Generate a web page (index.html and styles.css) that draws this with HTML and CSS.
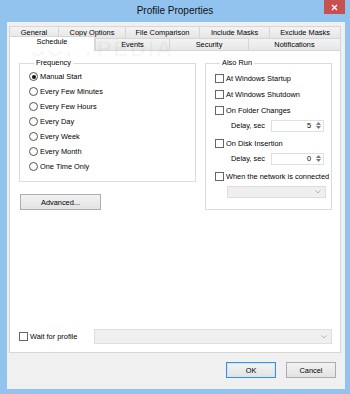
FILE: index.html
```html
<!DOCTYPE html>
<html lang="en">
  <head>
    <meta charset="UTF-8" />
    <title>Profile Properties</title>
    <link rel="stylesheet" href="styles.css">
  </head>
  <body>
    <div class="window">
      <div class="titlebar">
        <span class="title">Profile Properties</span>
        <div class="close">
          <svg width="7" height="7" viewBox="0 0 7 7"><path d="M1 1L6 6M6 1L1 6" stroke="#fff" stroke-width="1.4"/></svg>
        </div>
      </div>
      <div class="client">
        <div class="tabs">
          <div class="tabrow row1">
            <div class="tab">General</div>
            <div class="tab">Copy Options</div>
            <div class="tab">File Comparison</div>
            <div class="tab">Include Masks</div>
            <div class="tab">Exclude Masks</div>
          </div>
          <div class="tabrow row2">
            <div class="tab selected">Schedule</div>
            <div class="tab">Events</div>
            <div class="tab">Security</div>
            <div class="tab">Notifications</div>
          </div>
        </div>
        <div class="panel">
          <div class="groups">
            <div class="leftcol">
              <fieldset class="group freq">
                <legend>Frequency</legend>
                <div class="option"><span class="radio checked"></span>Manual Start</div>
                <div class="option"><span class="radio"></span>Every Few Minutes</div>
                <div class="option"><span class="radio"></span>Every Few Hours</div>
                <div class="option"><span class="radio"></span>Every Day</div>
                <div class="option"><span class="radio"></span>Every Week</div>
                <div class="option"><span class="radio"></span>Every Month</div>
                <div class="option"><span class="radio"></span>One Time Only</div>
              </fieldset>
              <button class="btn adv">Advanced...</button>
            </div>
            <fieldset class="group also">
              <legend>Also Run</legend>
              <div class="check-row"><span class="check"></span>At Windows Startup</div>
              <div class="check-row"><span class="check"></span>At Windows Shutdown</div>
              <div class="check-row"><span class="check"></span>On Folder Changes</div>
              <div class="delay">
                <span class="delay-label">Delay, sec</span>
                <div class="spin">
                  <span class="spin-value">5</span>
                  <span class="spin-arrows">
                    <svg width="5" height="3" viewBox="0 0 5 3"><path d="M0 3L2.5 0L5 3Z" fill="#777"/></svg>
                    <svg width="5" height="3" viewBox="0 0 5 3"><path d="M0 0L2.5 3L5 0Z" fill="#777"/></svg>
                  </span>
                </div>
              </div>
              <div class="check-row"><span class="check"></span>On Disk Insertion</div>
              <div class="delay">
                <span class="delay-label">Delay, sec</span>
                <div class="spin">
                  <span class="spin-value">0</span>
                  <span class="spin-arrows">
                    <svg width="5" height="3" viewBox="0 0 5 3"><path d="M0 3L2.5 0L5 3Z" fill="#777"/></svg>
                    <svg width="5" height="3" viewBox="0 0 5 3"><path d="M0 0L2.5 3L5 0Z" fill="#777"/></svg>
                  </span>
                </div>
              </div>
              <div class="check-row"><span class="check"></span>When the network is connected</div>
              <div class="combo net">
                <svg width="6" height="4" viewBox="0 0 6 4"><path d="M0.5 0.5L3 3L5.5 0.5" fill="none" stroke="#b5b5b5" stroke-width="1"/></svg>
              </div>
            </fieldset>
          </div>
          <div class="wait">
            <div class="wait-check"><span class="check"></span>Wait for profile</div>
            <div class="combo wait-combo">
              <svg width="6" height="4" viewBox="0 0 6 4"><path d="M0.5 0.5L3 3L5.5 0.5" fill="none" stroke="#b5b5b5" stroke-width="1"/></svg>
            </div>
          </div>
        </div>
        <div class="footer">
          <button class="btn ok">OK</button>
          <button class="btn">Cancel</button>
        </div>
      </div>
      <div class="watermark">SOFTPEDIA</div>
    </div>
  </body>
</html>
```

FILE: styles.css
```css
* {
  box-sizing: border-box;
}
body {
  margin: 0;
  font-family: "Liberation Sans", Arial, sans-serif;
  font-size: 7.4px;
  color: #000;
}
.window {
  width: 350px;
  height: 394px;
  background-color: #91c3ee;
  display: flex;
  flex-direction: column;
  position: relative;
  overflow: hidden;
}
.titlebar {
  height: 22px;
  display: grid;
  grid-template-columns: 1fr auto 1fr;
  align-items: start;
}
.title {
  grid-column: 2;
  font-size: 10px;
  line-height: 22px;
  color: #111;
}
.close {
  grid-column: 3;
  justify-self: end;
  margin-right: 5px;
  width: 21px;
  height: 14px;
  background-color: #c75050;
  display: flex;
  align-items: center;
  justify-content: center;
}
.client {
  flex: 1;
  margin: 0 5px 5px 7px;
  background-color: #f0f0f0;
  display: flex;
  flex-direction: column;
  padding: 4px 4px 0 2px;
}

/* tabs */
.tabrow {
  display: grid;
  height: 12px;
}
.row1 {
  grid-template-columns: 49px 67px 74px 70px 72px;
}
.row2 {
  grid-template-columns: 86px 74px 79px 93px;
}
.tab {
  border-top: 1px solid #d6d6d6;
  border-left: 1px solid #d6d6d6;
  background: linear-gradient(#f3f3f3, #e6e6e6);
  text-align: center;
  line-height: 11px;
  white-space: nowrap;
}
.tab:last-child {
  border-right: 1px solid #d6d6d6;
}
.row2 .tab {
  line-height: 12px;
}
.tab.selected {
  background: #fff;
  margin-top: -2px;
  height: 15px;
  line-height: 10px;
  border-right: 1px solid #d6d6d6;
  position: relative;
  z-index: 1;
}

/* panel */
.panel {
  height: 303px;
  background-color: #fff;
  border: 1px solid #d6d6d6;
  padding: 7px 8px 8px 9px;
  display: flex;
  flex-direction: column;
}
.groups {
  display: flex;
  gap: 9px;
}
.leftcol {
  display: flex;
  flex-direction: column;
}
.group {
  margin: 0;
  border: 1px solid #dcdcdc;
  min-width: 0;
}
.group legend {
  padding: 0 2px;
  margin-left: 5px;
  line-height: 10px;
}
.freq {
  width: 177px;
  padding: 1px 0 7px 9px;
}
.also {
  width: 127px;
  padding: 2px 0 11px 9px;
}
.option {
  height: 15px;
  display: flex;
  align-items: center;
  gap: 2px;
}
.radio {
  width: 9px;
  height: 9px;
  border: 1px solid #555;
  border-radius: 50%;
  background-color: #fff;
  display: flex;
  align-items: center;
  justify-content: center;
}
.radio.checked::after {
  content: "";
  width: 4px;
  height: 4px;
  border-radius: 50%;
  background-color: #111;
}
.check-row, .wait-check {
  height: 16px;
  display: flex;
  align-items: center;
  gap: 2px;
  white-space: nowrap;
}
.check {
  width: 9px;
  height: 9px;
  border: 1px solid #666;
  background-color: #fff;
  flex: none;
}
.delay {
  height: 15px;
  margin-bottom: 2px;
  display: flex;
  align-items: center;
  padding-left: 16px;
}
.delay-label {
  width: 40px;
}
.spin {
  width: 53px;
  height: 12px;
  border: 1px solid #e0e0e0;
  display: flex;
  align-items: center;
  justify-content: flex-end;
}
.spin-value {
  padding-right: 3px;
}
.spin-arrows {
  width: 9px;
  height: 10px;
  display: flex;
  flex-direction: column;
  align-items: center;
  justify-content: center;
  gap: 1px;
}
.spin-arrows svg {
  display: block;
}
.combo {
  height: 12px;
  background-color: #efefef;
  border: 1px solid #dedede;
  display: flex;
  align-items: center;
  justify-content: flex-end;
  padding-right: 4px;
}
.net {
  width: 99px;
  margin: 2px 0 0 12px;
}

/* buttons */
.btn {
  font-family: inherit;
  font-size: 7.4px;
  color: #000;
  border: 1px solid #adadad;
  background: linear-gradient(#f2f2f2, #e3e3e3);
  padding: 0;
  height: 16px;
}
.adv {
  width: 81px;
  margin: 12px 0 0 1px;
}

/* wait row */
.wait {
  margin-top: auto;
  display: flex;
  align-items: center;
  height: 15px;
}
.wait-check {
  width: 75px;
}
.wait-combo {
  width: 238px;
  height: 15px;
}

.footer {
  display: flex;
  justify-content: flex-end;
  gap: 10px;
  padding: 9px 5px 0 0;
}
.footer .btn {
  width: 50px;
}
.footer .ok {
  border-color: #3c8fdc;
  box-shadow: inset 0 0 0 1px #cfe5fa;
}

.watermark {
  position: absolute;
  left: 30px;
  top: 36px;
  font-size: 22px;
  font-weight: bold;
  letter-spacing: 2px;
  color: rgba(0, 0, 0, 0.04);
  pointer-events: none;
}
```
